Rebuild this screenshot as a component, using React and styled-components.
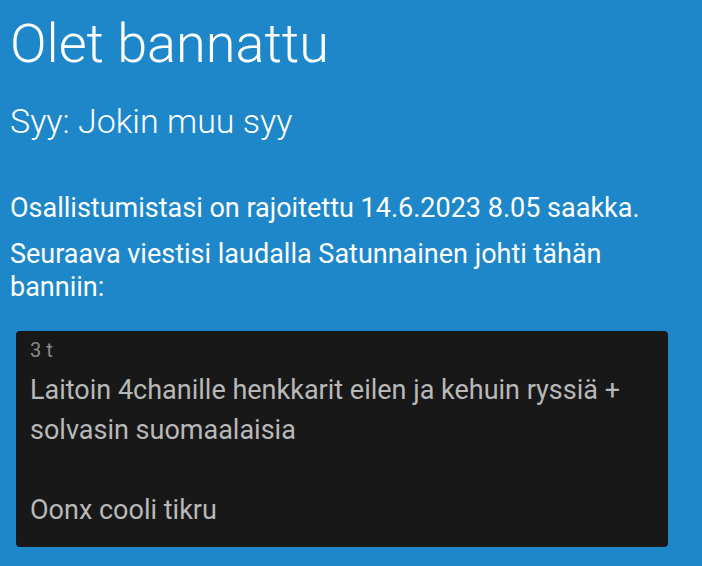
import React from 'react'
import styled, { createGlobalStyle } from 'styled-components'

const GlobalStyle = createGlobalStyle`
  html, body {
    margin: 0;
    padding: 0;
    background: #1d87c9;
  }
  body {
    font-family: Roboto, "Noto Sans", sans-serif;
    color: #ffffff;
  }
`

const Page = styled.div`
  min-height: 566px;
  background: #1d87c9;
  padding: 12px 10px 20px 10px;
  box-sizing: border-box;
`

const Title = styled.h1`
  margin: 0;
  font-size: 54px;
  font-weight: 300;
  line-height: 64px;
`

const Reason = styled.h2`
  margin: 25px 0 0 0;
  font-size: 34px;
  font-weight: 300;
  line-height: 40px;
`

const Text = styled.p`
  margin: ${p => p.$top || 0}px 0 0 0;
  font-size: 27px;
  font-weight: 400;
  line-height: 33px;
`

const Card = styled.div`
  margin: 27px 24px 0 6px;
  background: #181818;
  border-radius: 4px;
  padding: 7px 14px 17px 14px;
`

const Time = styled.div`
  font-size: 20px;
  color: #8a8a8a;
  line-height: 24px;
`

const Message = styled.div`
  margin-top: 8px;
  font-size: 27px;
  color: #b8b8b8;
  line-height: 40px;
  white-space: pre-wrap;
`

export default function App() {
  return (
    <>
      <GlobalStyle />
      <Page>
        <Title>Olet bannattu</Title>
        <Reason>Syy: Jokin muu syy</Reason>
        <Text $top={51}>Osallistumistasi on rajoitettu 14.6.2023 8.05 saakka.</Text>
        <Text $top={13}>Seuraava viestisi laudalla Satunnainen johti tähän banniin:</Text>
        <Card>
          <Time>3 t</Time>
          <Message>{'Laitoin 4chanille henkkarit eilen ja kehuin ryssiä + solvasin suomaalaisia\n\nOonx cooli tikru'}</Message>
        </Card>
      </Page>
    </>
  )
}
